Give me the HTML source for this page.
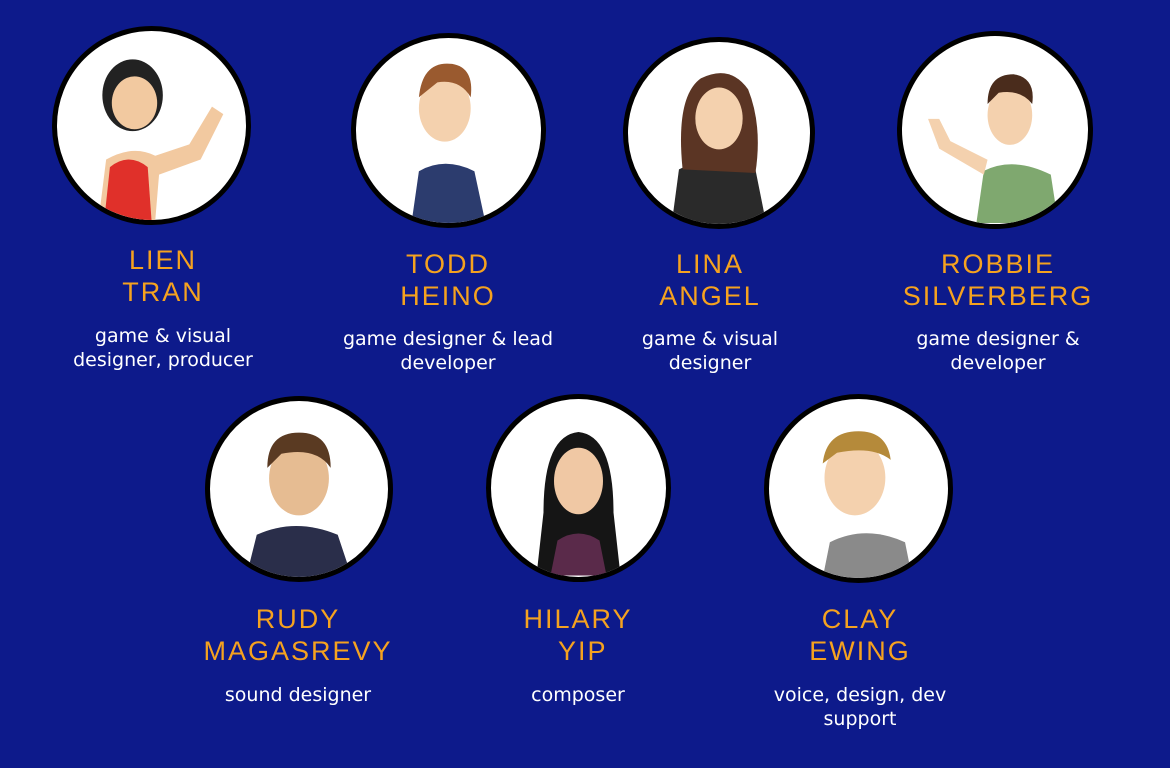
<!DOCTYPE html>
<html><head><meta charset="utf-8"><style>
html,body{margin:0;padding:0;}
body{width:1170px;height:768px;background:#0d1a8b;position:relative;overflow:hidden;font-family:"Liberation Sans",sans-serif;}
.c{position:absolute;border-radius:50%;background:#fff;border:5px solid #000;box-sizing:border-box;overflow:hidden;}
.c svg{position:absolute;left:0;top:0;width:100%;height:100%;}
.n{position:absolute;color:#f5a21f;font-size:27px;letter-spacing:2px;line-height:32px;text-align:center;width:300px;}
.d{position:absolute;color:#fff;font-family:"DejaVu Sans",sans-serif;font-size:19px;line-height:24px;text-align:center;width:320px;}
</style></head><body>

<div class="c" style="left:52px;top:26px;width:199px;height:199px"><svg viewBox="0 0 100 100">
<path d="M22 100 L26 68 Q40 60 52 66 L70 60 L82 40 L88 44 L76 68 L54 76 L52 100Z" fill="#f2c9a0"/>
<path d="M25 100 L28 72 Q38 64 48 72 L50 100Z" fill="#e0302a"/>
<ellipse cx="40" cy="34" rx="16" ry="19" fill="#222"/><ellipse cx="41" cy="38" rx="12" ry="14" fill="#f2c9a0"/></svg></div>
<div class="c" style="left:351px;top:33px;width:195px;height:195px"><svg viewBox="0 0 100 100">
<path d="M30 100 L34 72 Q48 64 64 72 L70 100Z" fill="#2c3c6e"/>
<ellipse cx="48" cy="38" rx="14" ry="18" fill="#f4d1ae"/><path d="M34 32 Q36 12 52 14 Q64 16 62 32 Q56 22 44 24Z" fill="#9a5a2f"/></svg></div>
<div class="c" style="left:623px;top:37px;width:192px;height:192px"><svg viewBox="0 0 100 100">
<path d="M24 100 L28 70 Q48 60 70 70 L76 100Z" fill="#2a2a2a"/>
<path d="M30 70 Q26 30 40 20 Q56 12 66 26 Q74 46 70 72Z" fill="#5b3524"/><ellipse cx="50" cy="42" rx="13" ry="17" fill="#f4d1ae"/></svg></div>
<div class="c" style="left:897px;top:31px;width:196px;height:198px"><svg viewBox="0 0 100 100">
<path d="M40 100 L44 72 Q60 64 80 74 L84 100Z" fill="#7fa86f"/><path d="M44 74 L20 60 L14 44 L20 44 L26 56 L46 66Z" fill="#f4d1ae"/>
<ellipse cx="58" cy="42" rx="12" ry="16" fill="#f4d1ae"/><path d="M46 36 Q46 20 60 20 Q72 22 70 36 Q64 28 52 30Z" fill="#4a2c1c"/></svg></div>
<div class="c" style="left:205px;top:396px;width:188px;height:186px"><svg viewBox="0 0 100 100">
<path d="M20 100 L26 76 Q48 66 72 76 L80 100Z" fill="#2a2e4a"/>
<ellipse cx="50" cy="44" rx="17" ry="21" fill="#e6bc92"/><path d="M32 38 Q32 18 50 18 Q68 18 68 38 Q60 26 40 30Z" fill="#5a3a22"/></svg></div>
<div class="c" style="left:486px;top:394px;width:185px;height:188px"><svg viewBox="0 0 100 100">
<path d="M26 100 L30 64 Q30 20 50 18 Q70 20 70 64 L74 100Z" fill="#151515"/><path d="M34 100 L38 80 Q50 72 62 80 L66 100Z" fill="#5a2a4a"/>
<ellipse cx="50" cy="46" rx="14" ry="19" fill="#f0c8a4"/></svg></div>
<div class="c" style="left:764px;top:394px;width:189px;height:189px"><svg viewBox="0 0 100 100">
<path d="M30 100 L34 80 Q54 70 76 80 L80 100Z" fill="#8a8a8a"/>
<ellipse cx="48" cy="44" rx="17" ry="21" fill="#f4d1ae"/><path d="M30 36 Q32 18 50 18 Q66 18 68 34 Q58 26 38 30Z" fill="#b58a3a"/></svg></div>

<div class="n" style="left:13px;top:244px">LIEN<br>TRAN</div>
<div class="d" style="left:3px;top:324px">game &amp; visual<br>designer, producer</div>
<div class="n" style="left:298px;top:248px">TODD<br>HEINO</div>
<div class="d" style="left:288px;top:327px">game designer &amp; lead<br>developer</div>
<div class="n" style="left:560px;top:248px">LINA<br>ANGEL</div>
<div class="d" style="left:550px;top:327px">game &amp; visual<br>designer</div>
<div class="n" style="left:848px;top:248px">ROBBIE<br>SILVERBERG</div>
<div class="d" style="left:838px;top:327px">game designer &amp;<br>developer</div>
<div class="n" style="left:148px;top:603px">RUDY<br>MAGASREVY</div>
<div class="d" style="left:138px;top:683px">sound designer</div>
<div class="n" style="left:428px;top:603px">HILARY<br>&nbsp;YIP</div>
<div class="d" style="left:418px;top:683px">composer</div>
<div class="n" style="left:710px;top:603px">CLAY<br>EWING</div>
<div class="d" style="left:700px;top:683px">voice, design, dev<br>support</div>
</body></html>
